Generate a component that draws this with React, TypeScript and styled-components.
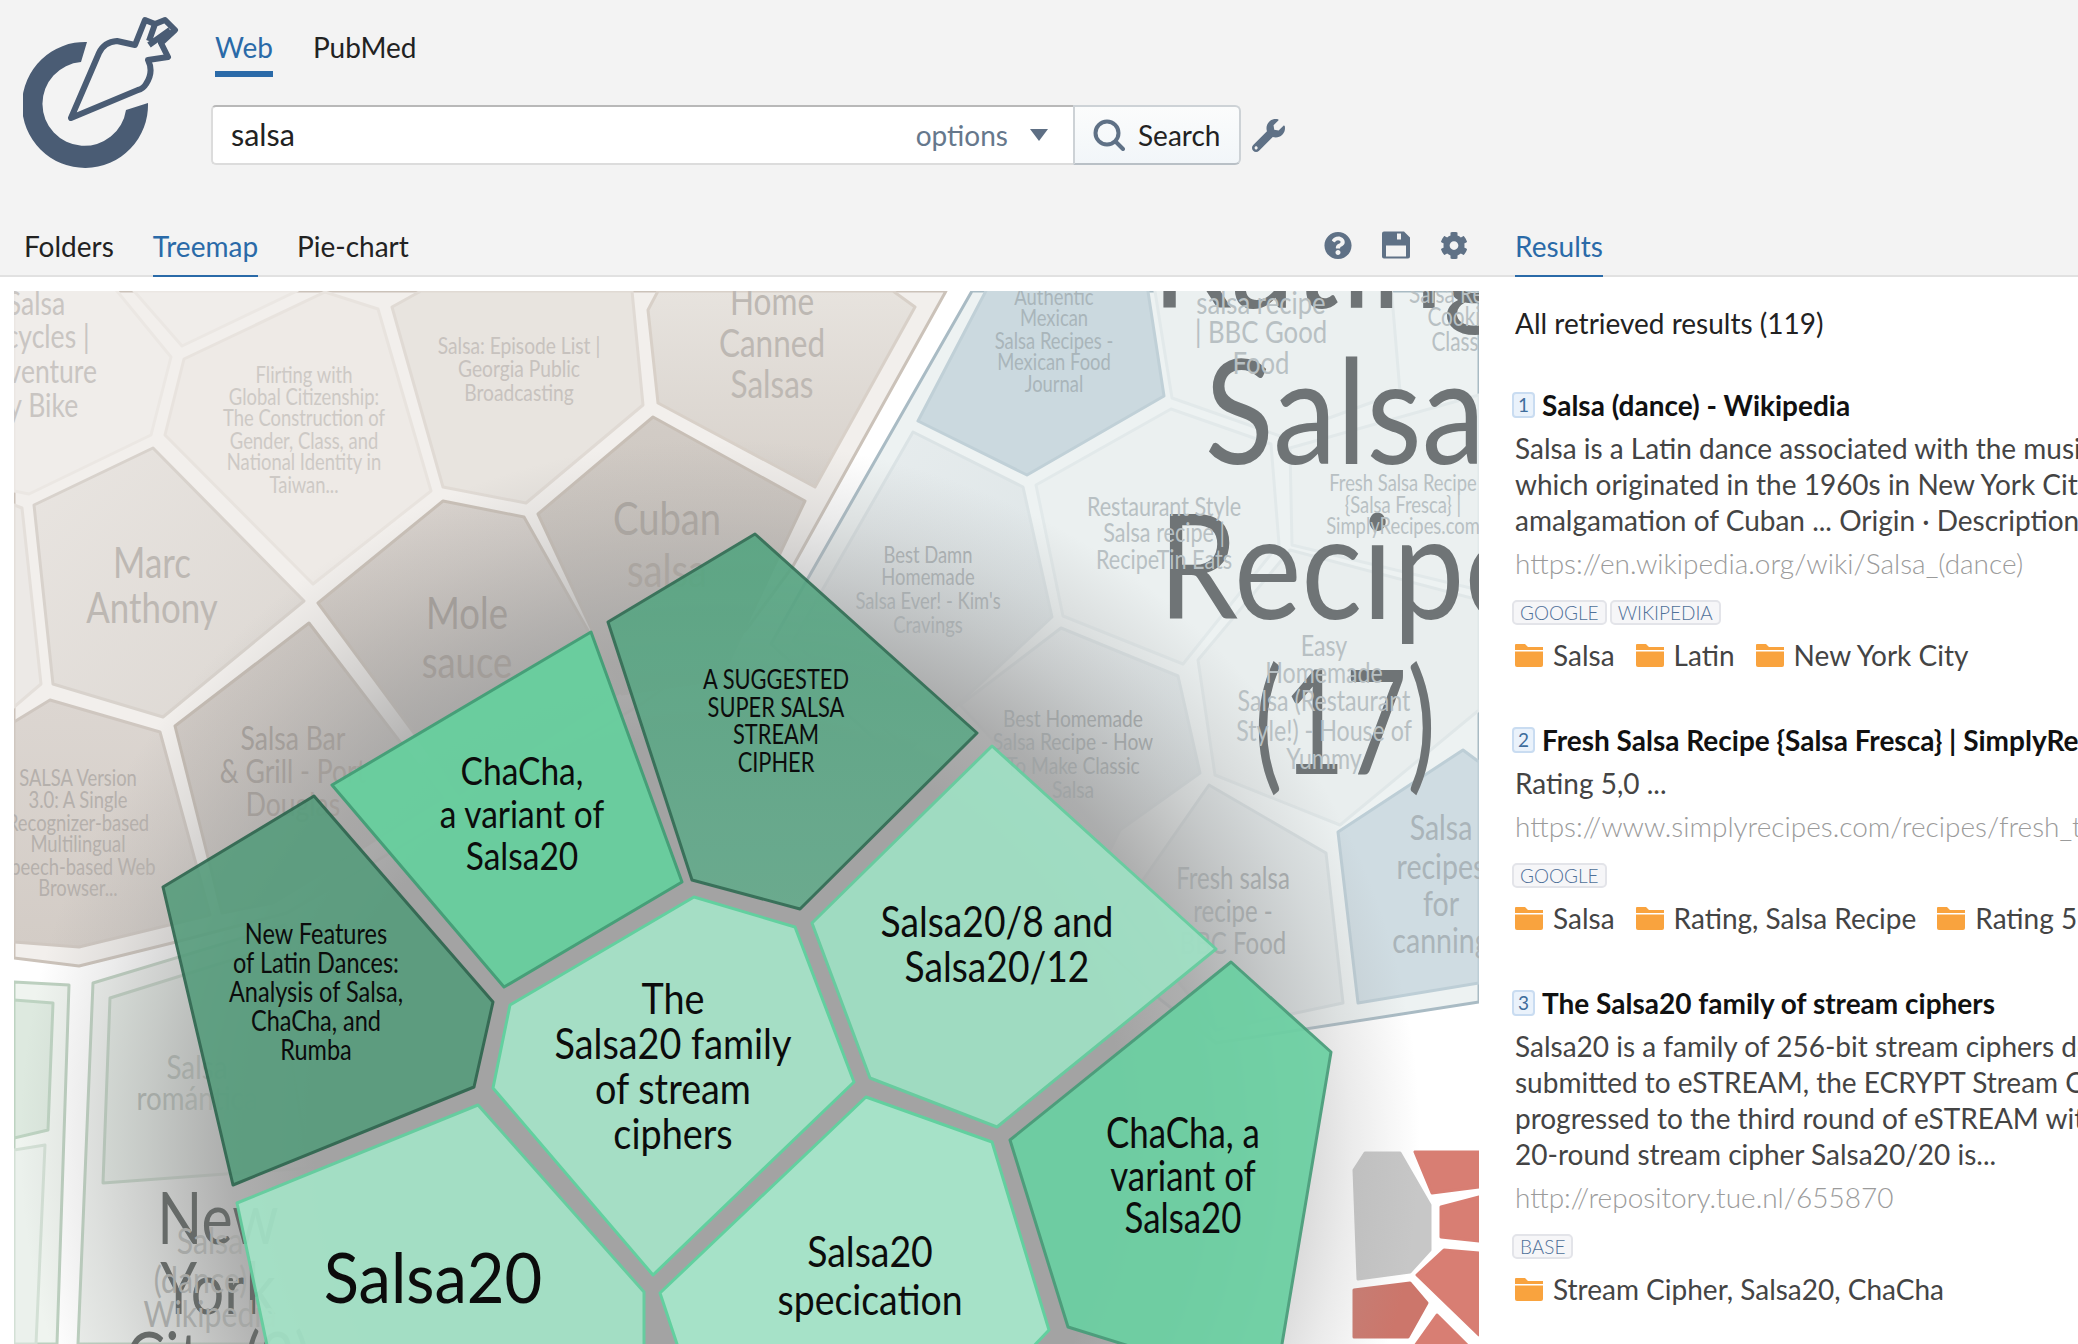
import React from 'react';
import styled, { createGlobalStyle } from 'styled-components';
import { FaCog, FaQuestionCircle, FaWrench } from 'react-icons/fa';

const Global = createGlobalStyle`
  html, body { margin: 0; padding: 0; background: #fff; overflow: hidden; }
  body { font-family: Lato, "Liberation Sans", sans-serif; color: #222; }
`;

const Page = styled.div`width: 2078px; height: 1344px; overflow: hidden;`;
const Header = styled.header`background: #f3f3f3;`;
const TopBar = styled.div`display: flex; height: 171px; padding-left: 24px;`;
const LogoSvg = styled.svg`width: 156px; height: 156px; margin-top: 15px; margin-left: -1px; margin-right: 1px; flex: none;`;
const SearchColumn = styled.div`margin-left: 31px;`;
const SourceTabs = styled.div`display: flex; gap: 40px; padding-left: 4px;`;
const SourceTab = styled.div<{ $on?: boolean }>`
  height: 36px; line-height: 36px; padding: 29px 0 6px; font-size: 28px;
  color: ${p => (p.$on ? '#2a6aa8' : '#222')};
  border-bottom: 6px solid ${p => (p.$on ? '#2a6aa8' : 'transparent')};
`;
const SearchRow = styled.div`display: flex; align-items: center; margin-top: 28px;`;
const SearchInput = styled.div`
  box-sizing: border-box; width: 862px; height: 60px; display: flex; align-items: center;
  padding: 0 25px 0 18px; background: #fff; font-size: 28px;
  border: 2px solid #dcdcdc; border-top-color: #b8b8b8; border-right: 0; border-radius: 5px 0 0 5px;
`;
const Query = styled.span`flex: 1; font-size: 30.5px; margin-top: -3px;`;
const Options = styled.span`color: #66788c; margin-right: 22px;`;
const Caret = styled.span`
  width: 0; height: 0; border-left: 9px solid transparent; border-right: 9px solid transparent;
  border-top: 12px solid #5e6f84;
`;
const SearchButton = styled.div`
  box-sizing: border-box; width: 168px; height: 60px; display: flex; align-items: center; gap: 13px; padding-left: 18px;
  background: linear-gradient(#fbfcfc, #f2f6f9); font-size: 28px; color: #222;
  border: 2px solid #cdd2d6; border-bottom-color: #b9c0c6; border-radius: 0 6px 6px 0;
`;
const WrenchSlot = styled.div`margin-left: 11px; color: #5f7186; font-size: 33px; display: flex;`;
const NavRow = styled.nav`
  box-sizing: border-box; height: 106px; display: flex; align-items: flex-end; padding-left: 24px;
  border-bottom: 2px solid #e1e1e1;
`;
const NavTabs = styled.div`flex: 1; display: flex; gap: 39px;`;
const NavTab = styled.div<{ $on?: boolean }>`
  height: 36px; line-height: 36px; padding-bottom: 11px; font-size: 28px; margin-bottom: -2px;
  color: ${p => (p.$on ? '#2a6aa8' : '#222')};
  border-bottom: 2px solid ${p => (p.$on ? '#2a6aa8' : 'transparent')};
`;
const Tools = styled.div`display: flex; align-items: center; gap: 30px; color: #5f7186; font-size: 29px; height: 30px; margin-bottom: 15px;`;
const ToolIcon = styled.span`width: 28px; display: flex; justify-content: center;`;
const ResultsNav = styled.div`width: 563px; margin-left: 47px; display: flex;`;
const Main = styled.main`display: flex;`;
const MapPane = styled.div`padding: 14px 0 0 14px; width: 1465px; flex: none;`;
const MapSvg = styled.svg`display: block; width: 1465px; height: 1053px;`;
const ResultsPane = styled.aside`margin-left: 36px; padding-top: 28px; font-size: 28px; line-height: 36px; white-space: nowrap;`;
const Count = styled.div`color: #222; margin-bottom: 46px;`;
const Result = styled.article`margin-bottom: 49px;`;
const TitleRow = styled.div`display: flex; align-items: center; margin-left: -3px; gap: 7px; font-weight: 700; color: #111; height: 36px;`;
const Rank = styled.span`
  box-sizing: border-box; width: 23px; height: 26px; display: flex; align-items: center; justify-content: center;
  font-size: 19px; font-weight: 400; color: #3f6d9c; background: #eaf2fb; border: 2px solid #c9dcf1; border-radius: 4px;
`;
const Snippet = styled.div`margin-top: 7px; color: #444;`;
const Url = styled.div`margin-top: 7px; color: #9b9b9b; font-weight: 300;`;
const Sources = styled.div`display: flex; gap: 3px; margin: 19px 0 0 -3px;`;
const Source = styled.span`
  box-sizing: border-box; height: 25px; padding: 0 6px; display: flex; align-items: center; font-size: 19px; font-weight: 300;
  color: #4f7098; background: #f6f6f8; border: 2px solid #e3e4e9; border-radius: 5px;
`;
const Folders = styled.div`display: flex; align-items: center; gap: 21px; margin-top: 12px; color: #444;`;
const Folder = styled.span`display: flex; align-items: center; gap: 10px;`;
const FolderSvg = styled.svg`width: 28px; height: 23px; fill: #f9a33e; flex: none;`;
const Cell = styled.polygon`stroke-linejoin: round; stroke-width: 3;`;
const MapLabel = styled.text`font-family: Lato, sans-serif; text-anchor: middle; dominant-baseline: central;`;

const FolderIcon = () => (
  <FolderSvg viewBox="0 0 28 23"><path d="M0 1a1 1 0 0 1 1-1h9l3 3h15v3H0z" /><path d="M0 7.5h28V21a2 2 0 0 1-2 2H2a2 2 0 0 1-2-2z" /></FolderSvg>
);

const SaveGlyph = () => (
  <svg width="28" height="28" viewBox="0 0 28 27" fill="currentColor">
    <path fillRule="evenodd" d="M2 0h20l6 6v19a2 2 0 0 1-2 2H2a2 2 0 0 1-2-2V2a2 2 0 0 1 2-2zM15 2v6h4V2zM4 14v11h20V14z" />
  </svg>
);

type C = [string, string, string?, number?];
const under: C[] = [
  ['14,291 946,291 793,566 746,630 640,705 378,860 287,913 172,943 79,966 14,958', '#f2efec', '#cbc2b9'],
  ['972,291 1479,291 1479,1002 1216,1043 1161,1000 927,787 771,644 807,580', '#edf2f2', '#a9bbc4'],
  ['14,982 69,985 57,1344 14,1344', '#eff4ef', '#bcd0bf'],
  ['93,983 285,925 363,1344 78,1344', '#eef1ee', '#bcd0bf'],
];
const cells: C[] = [
  ['112,285 171,357 151,435 29,494 14,491 14,285', '#f0edea', '#ebe7e3'],
  ['134,291 182,346 297,291', '#f0edea', '#ebe7e3'],
  ['325,292 378,309 431,491 313,584 165,435 184,359', '#eeeae6', '#e8e3de'],
  ['392,307 421,291 632,291 643,405 526,503 443,487', '#e8e4df', '#e0dad4'],
  ['648,310 658,291 893,291 915,307 815,487 658,403', 'url(#home)', '#d8d0c8'],
  ['153,448 304,601 163,717 53,684 34,505', 'url(#marc)', '#d8d2cc'],
  ['14,505 22,508 41,684 14,707', '#ece9e6', '#e4dfda'],
  ['653,417 805,501 720,680 622,694 538,514', 'url(#cuban)', '#c8bfb6'],
  ['443,501 524,517 622,691 459,794 318,603', 'url(#mole)', '#c8bfb6'],
  ['309,623 443,798 273,903 222,913 175,726', 'url(#bar)', '#c4bbb2'],
  ['50,700 160,732 210,915 79,947 14,942 14,722', 'url(#version)', '#cfc7c0'],
  ['989,285 1147,285 1164,396 1027,475 918,421', '#cbd9df', '#c0d0d7'],
  ['913,432 1023,487 1052,617 908,751 793,641', 'url(#damn)', '#dbe3e5'],
  ['1171,409 1271,444 1279,544 1183,664 1063,616 1036,485', '#ebf0f0', '#e2e9ea'],
  ['1154,285 1391,285 1400,392 1280,436 1172,398', '#ebf0f0', '#e2e9ea'],
  ['1290,448 1479,395 1479,590 1292,545', '#ebf0f0', '#e2e9ea'],
  ['1061,628 1178,676 1200,773 1120,830 1105,860 960,705', 'url(#damn)', '#dbe3e5'],
  ['1198,660 1290,550 1479,600 1479,710 1340,825 1215,775', '#e9eeee', '#e0e7e8'],
  ['1209,785 1326,853 1343,1003 1216,1030 1122,910', '#e2e8e9', '#d7dfe1'],
  ['1463,750 1479,762 1479,983 1358,1003 1338,832', '#cfdce2', '#bdced6'],
  ['14,1000 53,1003 48,1130 14,1138', '#dde9df', '#bdd3c1'],
  ['14,1150 45,1145 36,1344 14,1344', '#ebf1ec', '#d3e0d5'],
  ['110,998 273,947 309,1168 103,1183', '#e3eae4', '#bdd0c0'],
  ['1354,1170 1365,1153 1400,1153 1430,1205 1430,1250 1410,1272 1358,1279', '#c7c7c7', '#c7c7c7'],
  ['1415,1152 1479,1152 1479,1187 1432,1193', '#d87e73', '#d87e73'],
  ['1441,1207 1479,1197 1479,1241 1441,1237', '#d87e73', '#d87e73'],
  ['1444,1250 1479,1253 1479,1335 1417,1275', '#d87e73', '#d87e73'],
  ['1354,1290 1410,1283 1427,1303 1408,1337 1354,1337', '#cc766b', '#cc766b'],
  ['1437,1315 1468,1346 1415,1346', '#d87e73', '#d87e73'],
];
const green: C[] = [
  ['755,534 977,733 800,909 692,880 608,622', 'url(#dark)', '#2b6b50', 0.88],
  ['163,887 314,796 493,1002 474,1087 233,1185', '#549c7b', '#27634a', 0.88],
  ['332,785 591,632 682,882 504,987', '#66d09e', '#3f9f75', 0.93],
  ['1231,962 1331,1052 1281,1350 1142,1350 1068,1327 1010,1140', '#6bd0a2', '#479d79', 0.93],
  ['812,923 992,746 1216,949 997,1127 870,1078', '#9fe2c5', '#62d09f', 0.9],
  ['694,897 795,927 854,1082 653,1275 493,1088 510,1005', '#a5dec5', '#62d09f', 1],
  ['478,1105 644,1292 644,1350 268,1350 237,1203', '#a4e3c7', '#62d09f', 0.93],
  ['866,1097 992,1142 1049,1330 1030,1350 679,1350 660,1293', '#a6e2c8', '#62d09f', 1],
];
type L = [number, number[], number, string[], string, number?];
const tan = '#bdb8b3';
const blue = '#b8c0c3';
const labels: L[] = [
  [36, [302, 336, 370, 404], 32, ['Salsa', 'Bicycles |', 'Adventure', 'by Bike'], '#c9c5c2', 0.83],
  [304, [374, 396, 417, 440, 461, 484], 23, ['Flirting with', 'Global Citizenship:', 'The Construction of', 'Gender, Class, and', 'National Identity in', 'Taiwan...'], '#cdc9c5'],
  [519, [345, 368, 392], 24, ['Salsa: Episode List |', 'Georgia Public', 'Broadcasting'], '#c7c2be'],
  [772, [300, 342, 383], 38, ['Home', 'Canned', 'Salsas'], tan, 0.83],
  [152, [562, 607], 42, ['Marc', 'Anthony'], tan, 0.83],
  [667, [517, 569], 46, ['Cuban', 'salsa'], '#aaa5a0', 0.83],
  [467, [612, 661], 44, ['Mole', 'sauce'], '#a29d99', 0.83],
  [293, [737, 770, 804], 32, ['Salsa Bar', '& Grill - Port', 'Douglas'], '#a39e9a', 0.83],
  [78, [777, 799, 822, 843, 866, 887], 23, ['SALSA Version', '3.0: A Single', 'Recognizer-based', 'Multilingual', 'Speech-based Web', 'Browser...'], '#b5b0ac'],
  [1054, [296, 317, 340, 361, 383], 23, ['Authentic', 'Mexican', 'Salsa Recipes -', 'Mexican Food', 'Journal'], '#a9b5ba'],
  [1345, [252, 408, 563], 145, ['Rating,', 'Salsa', 'Recipe'], '#6f7476', 0.88],
  [1345, [718], 145, ['(17)'], '#6f7476', 0.74],
  [1261, [302, 331, 362], 31, ['salsa recipe', '| BBC Good', 'Food'], blue, 0.83],
  [1465, [293, 316, 341], 26, ['Salsa Recipe', 'Cooking', 'Classes'], blue],
  [1164, [506, 532, 559], 27, ['Restaurant Style', 'Salsa recipe |', 'RecipeTin Eats'], blue],
  [1403, [482, 504, 525], 23, ['Fresh Salsa Recipe', '{Salsa Fresca} |', 'SimplyRecipes.com'], blue],
  [928, [554, 576, 600, 624], 23, ['Best Damn', 'Homemade', "Salsa Ever! - Kim's", 'Cravings'], '#a9aeb0'],
  [1324, [645, 672, 700, 730, 758], 29, ['Easy', 'Homemade', 'Salsa (Restaurant', 'Style!) - House of', 'Yummy'], blue],
  [1073, [718, 741, 765, 789], 24, ['Best Homemade', 'Salsa Recipe - How', 'To Make Classic', 'Salsa'], '#a0a4a5'],
  [1233, [877, 910, 942], 30, ['Fresh salsa', 'recipe -', 'BBC Food'], '#a5a9aa'],
  [1441, [827, 866, 903, 940], 34, ['Salsa', 'recipes', 'for', 'canning'], '#aab4b9', 0.84],
  [197, [1066, 1097], 33, ['Salsa', 'romántica'], '#a5aaa6', 0.84],
  [218, [1216, 1286, 1356], 72, ['New', 'York', 'City (2)'], '#666a68', 0.82],
  [210, [1240, 1279, 1313], 36, ['Salsa', '(dance) -', 'Wikipedia'], '#a6a8a6', 0.84],
];
const greenLabels: L[] = [
  [776, [679, 707, 734, 762], 26, ['A SUGGESTED', 'SUPER SALSA', 'STREAM', 'CIPHER'], '#0c0c0c', 0.84],
  [522, [770, 813, 855], 39, ['ChaCha,', 'a variant of', 'Salsa20'], '#0c0c0c', 0.86],
  [316, [933, 962, 991, 1020, 1049], 28, ['New Features', 'of Latin Dances:', 'Analysis of Salsa,', 'ChaCha, and', 'Rumba'], '#0c0c0c', 0.84],
  [673, [998, 1043, 1088, 1133], 42, ['The', 'Salsa20 family', 'of stream', 'ciphers'], '#0c0c0c', 0.9],
  [997, [921, 966], 42, ['Salsa20/8 and', 'Salsa20/12'], '#0c0c0c', 0.886],
  [1183, [1132, 1175, 1217], 42, ['ChaCha, a', 'variant of', 'Salsa20'], '#0c0c0c', 0.83],
  [433, [1276], 70, ['Salsa20'], '#0c0c0c', 0.93],
  [870, [1250, 1298], 43, ['Salsa20', 'specication'], '#0c0c0c', 0.87],
];
const renderCell = (c: C, i: number) => <Cell key={i} points={c[0]} fill={c[1]} stroke={c[2]} opacity={c[3] ?? 1} />;
const renderLabel = (l: L, i: number) => (
  <g key={i} transform={`translate(${l[0]} 0) scale(${l[5] ?? 0.8} 1)`} fill={l[4]}>
    {l[3].map((t, j) => <MapLabel key={j} x={0} y={l[1][j]} fontSize={l[2]}>{t}</MapLabel>)}
  </g>
);

const Grad = ({ id, a, b, x2 = 1, y2 = 1 }: { id: string; a: string; b: string; x2?: number; y2?: number }) => (
  <linearGradient id={id} x1="0" y1="0" x2={x2} y2={y2}><stop offset="0" stopColor={a} /><stop offset="1" stopColor={b} /></linearGradient>
);

const shadeStops: [number, number][] = [[0, 1], [0.58, 1], [0.7, 0.85], [0.82, 0.45], [0.9, 0.22], [1, 0]];

const TreeMap = () => (
  <MapSvg viewBox="14 291 1465 1053">
    <defs>
      <Grad id="home" a="#e7e3de" b="#d7d1cb" x2={0} />
      <Grad id="marc" a="#e9e5e1" b="#dcd7d2" />
      <Grad id="cuban" a="#d2ccc6" b="#c2bbb5" x2={0} />
      <Grad id="mole" a="#d8d2cd" b="#bdb6b0" x2={0} />
      <Grad id="bar" a="#d2ccc7" b="#c4bdb7" />
      <Grad id="version" a="#dcd6d1" b="#d3ccc6" x2={0} />
      <Grad id="damn" a="#e9eeef" b="#dbe3e5" />
      <Grad id="dark" a="#52a47f" b="#64ab8c" x2={0} />
      <radialGradient id="shade" gradientUnits="userSpaceOnUse" cx="720" cy="1140" r="700">
        {shadeStops.map(([o, a]) => <stop key={o} offset={o} stopColor="#a3a3a3" stopOpacity={a} />)}
      </radialGradient>
    </defs>
    <rect x="14" y="291" width="1465" height="1053" fill="#fff" />
    {under.map(renderCell)}
    {cells.map(renderCell)}
    <rect x="14" y="291" width="1465" height="1053" fill="url(#shade)" />
    {labels.map(renderLabel)}
    {green.map(renderCell)}
    {greenLabels.map(renderLabel)}
  </MapSvg>
);

const Logo = () => (
  <LogoSvg viewBox="24 15 156 156">
    <path d="M88 42A63 63 0 1 0 149 103L127 110A42 42 0 1 1 82 62Z" fill="#4a5c74" />
    <path
      d="M72 118L100 53Q105 42 118 41L136 45L146 20L156 24L166 20L176 30L162 43L169 57L149 60Q155 72 147 84Q144 89 139 90ZM156 24L150 41M171 30L150 45"
      fill="none" stroke="#4a5c74" strokeWidth="6" strokeLinejoin="round"
    />
  </LogoSvg>
);

const SearchGlyph = () => (
  <svg width="32" height="32" viewBox="0 0 32 32" fill="none" stroke="#5f7186" strokeWidth="4" strokeLinecap="round">
    <circle cx="14" cy="14" r="11.5" /><path d="M23 23l7 7" />
  </svg>
);

const results = [
  { n: 1, title: 'Salsa (dance) - Wikipedia', lines: ['Salsa is a Latin dance associated with the music genre of the same name,', 'which originated in the 1960s in New York City. Salsa is a', 'amalgamation of Cuban ... Origin · Description · History'], url: 'https://en.wikipedia.org/wiki/Salsa_(dance)', tags: ['GOOGLE', 'WIKIPEDIA'], folders: ['Salsa', 'Latin', 'New York City'] },
  { n: 2, title: 'Fresh Salsa Recipe {Salsa Fresca} | SimplyRecipes.com', lines: ['Rating 5,0 ...'], url: 'https://www.simplyrecipes.com/recipes/fresh_tomato_salsa/', tags: ['GOOGLE'], folders: ['Salsa', 'Rating, Salsa Recipe', 'Rating 5,0'] },
  { n: 3, title: 'The Salsa20 family of stream ciphers', lines: ['Salsa20 is a family of 256-bit stream ciphers designed in 2005 and', 'submitted to eSTREAM, the ECRYPT Stream Cipher Project. Salsa20 has', 'progressed to the third round of eSTREAM without any changes. The', '20-round stream cipher Salsa20/20 is...'], url: 'http://repository.tue.nl/655870', tags: ['BASE'], folders: ['Stream Cipher, Salsa20, ChaCha'] },
];

export default function App() {
  return (
    <Page>
      <Global />
      <Header>
        <TopBar>
          <Logo />
          <SearchColumn>
            <SourceTabs>
              <SourceTab $on>Web</SourceTab>
              <SourceTab>PubMed</SourceTab>
            </SourceTabs>
            <SearchRow>
              <SearchInput>
                <Query>salsa</Query>
                <Options>options</Options>
                <Caret />
              </SearchInput>
              <SearchButton><SearchGlyph />Search</SearchButton>
              <WrenchSlot><FaWrench /></WrenchSlot>
            </SearchRow>
          </SearchColumn>
        </TopBar>
        <NavRow>
          <NavTabs>
            <NavTab>Folders</NavTab>
            <NavTab $on>Treemap</NavTab>
            <NavTab>Pie-chart</NavTab>
          </NavTabs>
          <Tools>
            <ToolIcon><FaQuestionCircle /></ToolIcon>
            <ToolIcon><SaveGlyph /></ToolIcon>
            <ToolIcon><FaCog /></ToolIcon>
          </Tools>
          <ResultsNav><NavTab $on>Results</NavTab></ResultsNav>
        </NavRow>
      </Header>
      <Main>
        <MapPane><TreeMap /></MapPane>
        <ResultsPane>
          <Count>All retrieved results (119)</Count>
          {results.map(r => (
            <Result key={r.n}>
              <TitleRow><Rank>{r.n}</Rank>{r.title}</TitleRow>
              <Snippet>{r.lines.map(l => <div key={l}>{l}</div>)}</Snippet>
              <Url>{r.url}</Url>
              <Sources>{r.tags.map(t => <Source key={t}>{t}</Source>)}</Sources>
              <Folders>{r.folders.map(f => <Folder key={f}><FolderIcon />{f}</Folder>)}</Folders>
            </Result>
          ))}
        </ResultsPane>
      </Main>
    </Page>
  );
}
